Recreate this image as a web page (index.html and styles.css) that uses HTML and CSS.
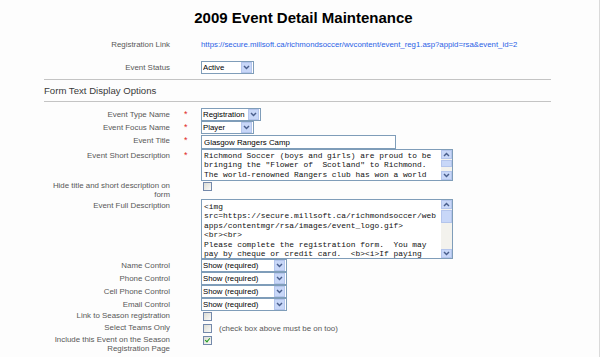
FILE: index.html
```html
<!DOCTYPE html>
<html lang="en">

<head>
    <meta charset="UTF-8">
    <meta name="viewport" content="width=device-width, initial-scale=1.0">
    <title>Event Detail Maintenance</title>
    <link rel="stylesheet" href="styles.css">
</head>

<body>
    <div class="page">
        <h1 class="title">2009 Event Detail Maintenance</h1>
        <div class="form">
            <div class="info-row">
                <span class="label">Registration Link</span>
                <span class="req"></span>
                <a class="link" href="#">https://secure.millsoft.ca/richmondsoccer/wvcontent/event_reg1.asp?appid=rsa&amp;event_id=2</a>
            </div>
            <div class="info-row">
                <span class="label">Event Status</span>
                <span class="req"></span>
                <div class="select w-53">
                    <select><option>Active</option></select>
                    <span class="drop"><svg width="7" height="5" viewBox="0 0 7 5"><path d="M1 1 L3.5 3.6 L6 1" /></svg></span>
                </div>
            </div>

            <h2 class="section">Form Text Display Options</h2>

            <div class="fields">
                <div class="field">
                    <span class="label">Event Type Name</span>
                    <span class="req">*</span>
                    <div class="select w-59">
                        <select><option>Registration</option></select>
                        <span class="drop"><svg width="7" height="5" viewBox="0 0 7 5"><path d="M1 1 L3.5 3.6 L6 1" /></svg></span>
                    </div>
                </div>
                <div class="field">
                    <span class="label">Event Focus Name</span>
                    <span class="req">*</span>
                    <div class="select w-53">
                        <select><option>Player</option></select>
                        <span class="drop"><svg width="7" height="5" viewBox="0 0 7 5"><path d="M1 1 L3.5 3.6 L6 1" /></svg></span>
                    </div>
                </div>
                <div class="field">
                    <span class="label">Event Title</span>
                    <span class="req">*</span>
                    <input class="text" type="text" value="Glasgow Rangers Camp">
                </div>
                <div class="field">
                    <span class="label">Event Short Description</span>
                    <span class="req">*</span>
                    <div class="memo short">
                        <textarea>Richmond Soccer (boys and girls) are proud to be
bringing the "Flower of  Scotland" to Richmond.
The world-renowned Rangers club has won a world</textarea>
                        <div class="scroll">
                            <span class="sb-btn"><svg width="7" height="5" viewBox="0 0 7 5"><path d="M1 4 L3.5 1.4 L6 4" /></svg></span>
                            <span class="thumb"></span>
                            <span class="track"></span>
                            <span class="sb-btn"><svg width="7" height="5" viewBox="0 0 7 5"><path d="M1 1 L3.5 3.6 L6 1" /></svg></span>
                        </div>
                    </div>
                </div>
                <div class="field two-line">
                    <span class="label">Hide title and short description on form</span>
                    <span class="req"></span>
                    <div class="ctl"><input class="check" type="checkbox"></div>
                </div>
                <div class="field">
                    <span class="label">Event Full Description</span>
                    <span class="req"></span>
                    <div class="memo full">
                        <textarea>&lt;img
src=https://secure.millsoft.ca/richmondsoccer/web
apps/contentmgr/rsa/images/event_logo.gif&gt;
&lt;br&gt;&lt;br&gt;
Please complete the registration form.  You may
pay by cheque or credit card.  &lt;b&gt;&lt;i&gt;If paying</textarea>
                        <div class="scroll">
                            <span class="sb-btn"><svg width="7" height="5" viewBox="0 0 7 5"><path d="M1 4 L3.5 1.4 L6 4" /></svg></span>
                            <span class="thumb"></span>
                            <span class="track"></span>
                            <span class="sb-btn"><svg width="7" height="5" viewBox="0 0 7 5"><path d="M1 1 L3.5 3.6 L6 1" /></svg></span>
                        </div>
                    </div>
                </div>
                <div class="field">
                    <span class="label">Name Control</span>
                    <span class="req"></span>
                    <div class="select w-86">
                        <select><option>Show (required)</option></select>
                        <span class="drop"><svg width="7" height="5" viewBox="0 0 7 5"><path d="M1 1 L3.5 3.6 L6 1" /></svg></span>
                    </div>
                </div>
                <div class="field">
                    <span class="label">Phone Control</span>
                    <span class="req"></span>
                    <div class="select w-86">
                        <select><option>Show (required)</option></select>
                        <span class="drop"><svg width="7" height="5" viewBox="0 0 7 5"><path d="M1 1 L3.5 3.6 L6 1" /></svg></span>
                    </div>
                </div>
                <div class="field">
                    <span class="label">Cell Phone Control</span>
                    <span class="req"></span>
                    <div class="select w-86">
                        <select><option>Show (required)</option></select>
                        <span class="drop"><svg width="7" height="5" viewBox="0 0 7 5"><path d="M1 1 L3.5 3.6 L6 1" /></svg></span>
                    </div>
                </div>
                <div class="field">
                    <span class="label">Email Control</span>
                    <span class="req"></span>
                    <div class="select w-86">
                        <select><option>Show (required)</option></select>
                        <span class="drop"><svg width="7" height="5" viewBox="0 0 7 5"><path d="M1 1 L3.5 3.6 L6 1" /></svg></span>
                    </div>
                </div>
                <div class="field box-row">
                    <span class="label">Link to Season registration</span>
                    <span class="req"></span>
                    <div class="ctl"><input class="check" type="checkbox"></div>
                </div>
                <div class="field box-row">
                    <span class="label">Select Teams Only</span>
                    <span class="req"></span>
                    <div class="ctl"><input class="check" type="checkbox"><span class="note">(check box above must be on too)</span></div>
                </div>
                <div class="field box-row">
                    <span class="label">Include this Event on the Season Registration Page</span>
                    <span class="req"></span>
                    <div class="ctl"><input class="check" type="checkbox" checked></div>
                </div>
            </div>
        </div>
    </div>
</body>

</html>
```

FILE: styles.css
```css
html,
body {
    margin: 0;
    background: #fdfdfd;
    overflow: hidden;
}

.page {
    width: 600px;
    height: 357px;
    box-sizing: border-box;
    border-right: 1px solid #dadada;
    padding-top: 9px;
    font-family: "Liberation Sans", Arial, sans-serif;
    font-size: 7.9px;
    color: #585858;
}

.title {
    margin: 0 0 6px;
    padding-left: 8px;
    text-align: center;
    font-size: 15px;
    line-height: 18px;
    color: #000;
}

.form {
    width: 507px;
    margin-left: 44px;
}

/* 上面两行 */
.info-row {
    display: grid;
    grid-template-columns: 126px 31px 1fr;
    align-items: center;
    height: 23px;
}

.label {
    text-align: right;
}

.req {
    padding-left: 14px;
    color: #e02828;
    font-size: 9px;
    line-height: 9px;
}

.link {
    color: #2a62e6;
    font-size: 7.8px;
    text-decoration: none;
    white-space: nowrap;
}

.section {
    margin: 0;
    height: 21px;
    line-height: 21px;
    border-top: 1px solid #c4c4c4;
    border-bottom: 1px solid #c4c4c4;
    font-size: 9.6px;
    font-weight: normal;
    color: #3a3a3a;
}

.fields {
    padding-top: 6px;
}

.field {
    display: grid;
    grid-template-columns: 126px 31px 1fr;
    align-items: start;
}

.field .label {
    line-height: 9px;
    padding-top: 2px;
}

.field .req {
    padding-top: 2px;
}

.field.two-line .label,
.field.box-row .label {
    padding-top: 0;
}

.field.box-row {
    min-height: 12px;
}

/* 下拉框 */
.select {
    display: flex;
    height: 13px;
    box-sizing: border-box;
    border: 1px solid #7f9db9;
    background: #fff;
}

.w-53 {
    width: 53px;
}

.w-59 {
    width: 60px;
}

.w-86 {
    width: 86px;
}

.select select {
    appearance: none;
    -webkit-appearance: none;
    flex: 1;
    min-width: 0;
    height: 11px;
    margin: 0;
    padding: 0 0 0 1px;
    border: 0;
    outline: none;
    background: transparent;
    font: 7.8px/11px "Liberation Sans", Arial, sans-serif;
    color: #000;
}

.drop,
.sb-btn {
    display: flex;
    align-items: center;
    justify-content: center;
    box-sizing: border-box;
    background: #c8d7f8;
    border: 1px solid #b4c5ec;
}

.drop {
    flex: none;
    width: 11px;
    margin: 0 1px 0 0;
}

.drop path,
.sb-btn path {
    fill: none;
    stroke: #4a5f8c;
    stroke-width: 1.4;
}

.text {
    display: block;
    width: 195px;
    height: 14px;
    margin: 1px 0 0;
    padding: 0 2px;
    box-sizing: border-box;
    border: 1px solid #7f9db9;
    outline: none;
    background: #fff;
    font: 7.9px "Liberation Sans", Arial, sans-serif;
    color: #000;
}

/* 多行文本 + 假滚动条 */
.memo {
    display: flex;
    width: 252px;
    box-sizing: border-box;
    border: 1px solid #7f9db9;
    background: #fff;
}

.memo.short {
    height: 32px;
}

.memo.full {
    height: 60px;
}

.memo textarea {
    flex: 1;
    margin: 0;
    padding: 1px 0 0 2px;
    border: 0;
    outline: none;
    resize: none;
    overflow: hidden;
    white-space: pre;
    background: transparent;
    font: 7.9px/9.4px "Liberation Mono", "Courier New", monospace;
    color: #111;
}

.memo.full textarea {
    padding-top: 2px;
}

.scroll {
    display: flex;
    flex-direction: column;
    width: 11px;
    background: #f3f2ed;
}

.sb-btn {
    height: 9px;
}

.thumb {
    height: 5px;
    margin-top: 1px;
    background: #c8d7f8;
    border: 1px solid #b4c5ec;
}

.memo.full .thumb {
    height: 11px;
}

.track {
    flex: 1;
}

/* 复选框 */
.ctl {
    display: flex;
    align-items: center;
}

.check {
    appearance: none;
    -webkit-appearance: none;
    position: relative;
    width: 9px;
    height: 9px;
    margin: 1px 0 0 2px;
    box-sizing: border-box;
    border: 1px solid #7489ab;
    background: linear-gradient(135deg, #dcdcd4, #fafaf8);
}

.check:checked::after {
    content: '';
    position: absolute;
    left: 2px;
    top: 0;
    width: 2px;
    height: 4px;
    border-right: 1.5px solid #1e9b1e;
    border-bottom: 1.5px solid #1e9b1e;
    transform: rotate(40deg);
}

.note {
    margin-left: 7px;
    padding-top: 1px;
}
```
